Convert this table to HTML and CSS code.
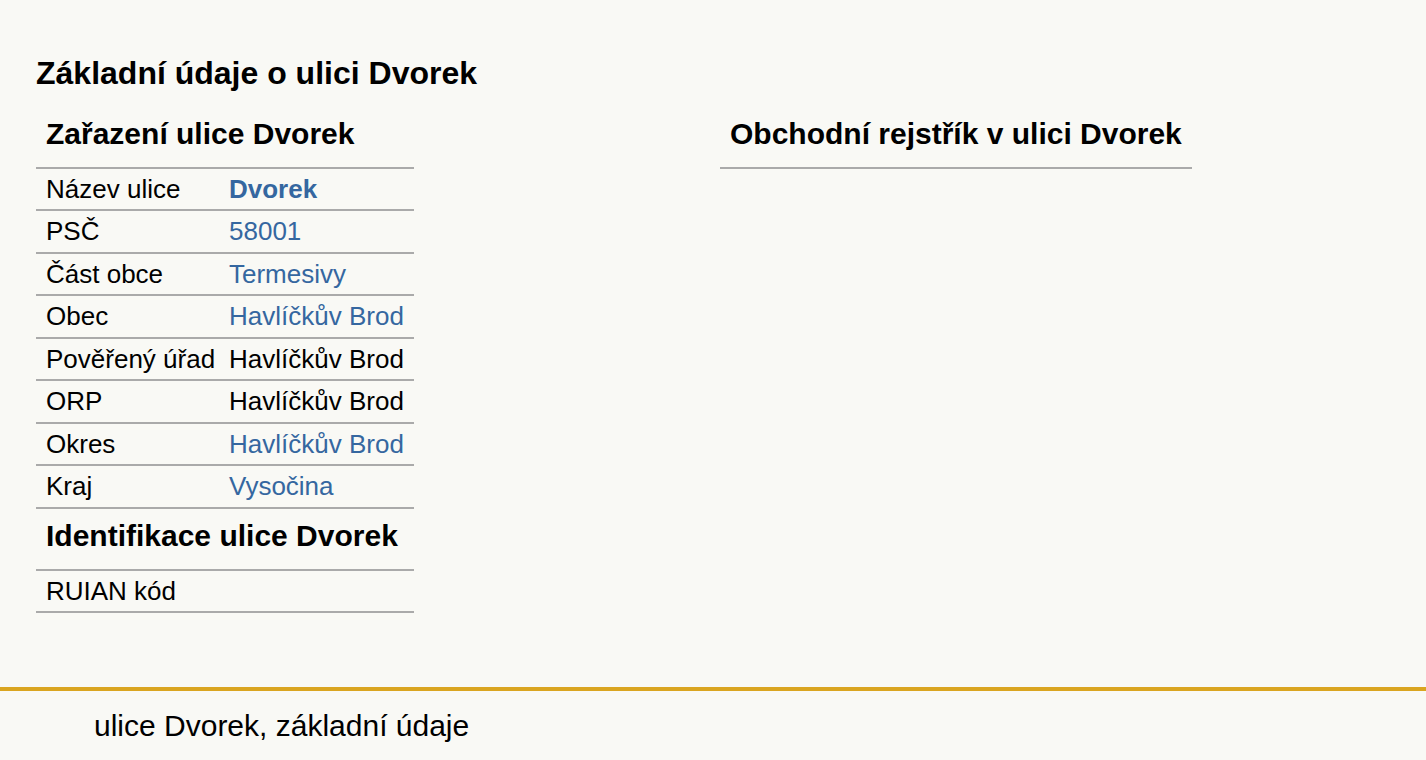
FILE: index.html
```html
<!DOCTYPE html>
<html lang="cs">
<head>
<meta charset="utf-8">
<title>Ulice Dvorek, základní údaje</title>
<link rel="stylesheet" href="styles.css">
</head>
<body>
<main class="page">
  <h1 class="title">Základní údaje o ulici Dvorek</h1>
  <div class="cols">
    <section class="col col-left">
      <table class="info">
        <colgroup><col class="c1"><col class="c2"></colgroup>
        <tr><th colspan="2">Zařazení ulice Dvorek</th></tr>
        <tr><td>Název ulice</td><td><a class="strong" href="#">Dvorek</a></td></tr>
        <tr><td>PSČ</td><td><a href="#">58001</a></td></tr>
        <tr><td>Část obce</td><td><a href="#">Termesivy</a></td></tr>
        <tr><td>Obec</td><td><a href="#">Havlíčkův Brod</a></td></tr>
        <tr><td>Pověřený úřad</td><td>Havlíčkův Brod</td></tr>
        <tr><td>ORP</td><td>Havlíčkův Brod</td></tr>
        <tr><td>Okres</td><td><a href="#">Havlíčkův Brod</a></td></tr>
        <tr><td>Kraj</td><td><a href="#">Vysočina</a></td></tr>
        <tr><th colspan="2">Identifikace ulice Dvorek</th></tr>
        <tr><td>RUIAN kód</td><td></td></tr>
      </table>
    </section>
    <section class="col col-right">
      <table class="info wide">
        <tr><th>Obchodní rejstřík v ulici Dvorek</th></tr>
      </table>
    </section>
  </div>
</main>
<footer class="footer">ulice Dvorek, základní údaje</footer>
</body>
</html>
```

FILE: styles.css
```css
html, body {
  margin: 0;
  padding: 0;
  background: #f9f9f5;
  color: #000;
  font-family: "Liberation Sans", Arial, sans-serif;
}

.page {
  padding: 55px 36px 74px;
}

.title {
  margin: 0 0 15px;
  font-size: 32px;
  line-height: 37px;
  font-weight: bold;
}

.cols {
  display: grid;
  grid-template-columns: 684px 472px;
}

.info {
  border-collapse: collapse;
  table-layout: fixed;
  width: 378px;
  font-size: 26px;
}

.info.wide {
  width: 472px;
}

.info .c1 { width: 193px; }
.info .c2 { width: 185px; }

.info tr {
  border-bottom: 2px solid #aaaaaa;
}

.info th {
  text-align: left;
  font-size: 30px;
  line-height: 34.5px;
  font-weight: bold;
  padding: 10px 10px 15.5px;
  white-space: nowrap;
}

.info td {
  line-height: 30px;
  padding: 5px 0 5.45px;
  white-space: nowrap;
}

.info td:first-child {
  padding-left: 10px;
}

.info a {
  color: #3567a0;
  text-decoration: none;
}

.info a.strong {
  font-weight: bold;
}

.footer {
  border-top: 4px solid #daa520;
  padding: 18px 94px 20px;
  font-size: 30px;
  line-height: 34.5px;
}
```
